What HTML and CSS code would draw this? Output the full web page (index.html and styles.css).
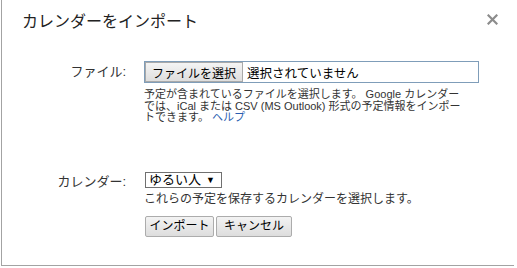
FILE: index.html
```html
<!DOCTYPE html>
<html lang="ja">
<head>
<meta charset="utf-8">
<title>カレンダーをインポート</title>
<link rel="stylesheet" href="styles.css">
</head>
<body>
<div class="dialog">
  <div class="head">
    <h1 class="title">カレンダーをインポート</h1>
    <span class="close" aria-label="閉じる">
      <svg width="11" height="11" viewBox="0 0 11 11"><path d="M1.5 1.5 L9.5 9.5 M9.5 1.5 L1.5 9.5" stroke="#8c8c8c" stroke-width="2.2" stroke-linecap="square"/></svg>
    </span>
  </div>
  <div class="form">
    <div class="row row-file">
      <label class="label label-file">ファイル:</label>
      <div class="field">
        <div class="file">
          <span class="file-btn">ファイルを選択</span>
          <span class="file-name">選択されていません</span>
        </div>
        <p class="help">予定が含まれているファイルを選択します。 Google カレンダー<br>では、iCal または CSV (MS Outlook) 形式の予定情報をインポー<br>トできます。 <a class="link" href="#">ヘルプ</a></p>
      </div>
    </div>
    <div class="row row-cal">
      <label class="label label-cal">カレンダー:</label>
      <div class="field">
        <div class="select"><span>ゆるい人</span><span class="arrow">▼</span></div>
        <p class="desc">これらの予定を保存するカレンダーを選択します。</p>
        <div class="buttons">
          <button class="btn btn-import">インポート</button>
          <button class="btn btn-cancel">キャンセル</button>
        </div>
      </div>
    </div>
  </div>
</div>
</body>
</html>
```
FILE: styles.css
```css
html, body {
  margin: 0;
  padding: 0;
  background: #fff;
}
body {
  font-family: "Liberation Sans", "Noto Sans CJK JP", sans-serif;
  color: #222;
}
.dialog {
  box-sizing: border-box;
  margin-left: 1px;
  width: 513px;
  height: 266px;
  border-left: 1px solid #a3a3a3;
  border-bottom: 1px solid #a3a3a3;
  box-shadow: 0 1px 0 #d6d6d6;
  background: #fff;
}
.head {
  display: flex;
  justify-content: space-between;
  align-items: flex-start;
  padding: 12px 16px 0 20px;
}
.title {
  margin: 0;
  font-size: 16px;
  line-height: 20px;
  font-weight: normal;
  color: #222;
}
.close {
  display: flex;
  margin-top: 2px;
}
.form {
  margin-top: 29px;
}
.row {
  display: grid;
  grid-template-columns: 124px 1fr;
  column-gap: 18px;
}
.label {
  text-align: right;
  font-size: 13px;
  color: #333;
}
.label-file {
  line-height: 22px;
}
.label-cal {
  line-height: 22px;
  margin-top: 1px;
}
.file {
  box-sizing: border-box;
  display: flex;
  align-items: stretch;
  width: 335px;
  height: 22px;
  border: 1px solid #7f9db9;
}
.file-btn {
  box-sizing: border-box;
  display: flex;
  align-items: center;
  width: 98px;
  justify-content: center;
  white-space: nowrap;
  font-size: 12px;
  color: #000;
  border: 1px solid #a9a9a9;
  background: linear-gradient(#f4f4f4, #dedede);
}
.file-name {
  display: flex;
  align-items: center;
  padding-left: 4px;
  font-size: 12.5px;
  color: #000;
}
.help {
  margin: 6px 0 0;
  font-size: 11px;
  line-height: 11.5px;
  color: #333;
}
.link {
  color: #2a5db0;
  text-decoration: none;
}
.row-cal {
  margin-top: 46px;
}
.select {
  box-sizing: border-box;
  display: flex;
  align-items: center;
  justify-content: space-between;
  width: 77px;
  height: 16px;
  margin-left: 1px;
  margin-top: 2px;
  padding: 0 6px 0 3px;
  border: 1px solid #707070;
  font-size: 13px;
  line-height: 14px;
  color: #000;
}
.arrow {
  font-size: 9px;
}
.desc {
  margin: 4px 0 0;
  font-size: 12px;
  line-height: 15px;
  color: #333;
}
.buttons {
  display: flex;
  gap: 2px;
  margin-top: 9px;
  margin-left: 1px;
}
.btn {
  box-sizing: border-box;
  height: 21px;
  padding: 0;
  white-space: nowrap;
  font-family: inherit;
  font-size: 12px;
  line-height: 19px;
  color: #000;
  border: 1px solid #acacac;
  border-radius: 2px;
  background: linear-gradient(#f3f3f3, #dddddd);
}
.btn-import { width: 69px; }
.btn-cancel { width: 76px; }
```
